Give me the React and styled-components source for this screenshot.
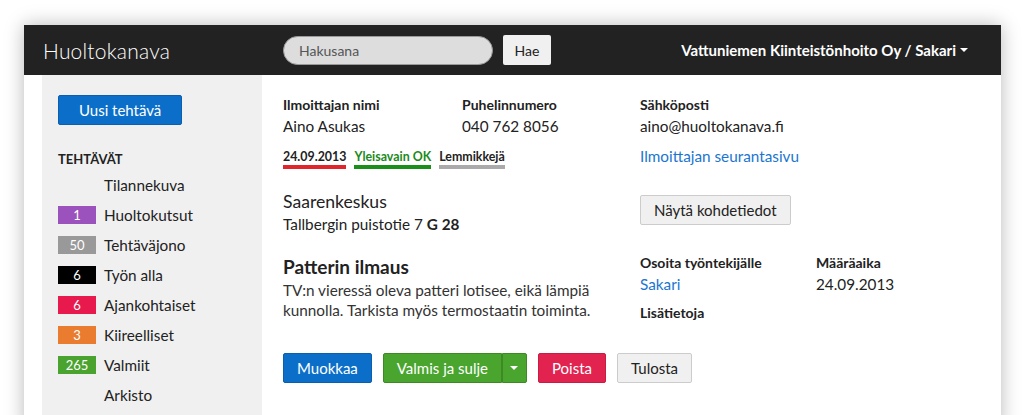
import React from 'react';
import styled, { createGlobalStyle } from 'styled-components';

const Global = createGlobalStyle`
  body {
    margin: 0;
    background: #fff;
    font-family: Lato, "Open Sans", sans-serif;
    color: #222;
  }
`;

const Window = styled.div`
  margin: 25px 0 0 24px;
  width: 977px;
  min-height: 400px;
  background: #fff;
  box-shadow: 0 0 18px rgba(0, 0, 0, 0.28);
`;

const Header = styled.div`
  height: 50px;
  background: #222;
  display: flex;
  align-items: center;
  padding: 0 33px 0 19px;
`;

const Brand = styled.div`
  width: 240px;
  flex-shrink: 0;
  color: #fff;
  font-size: 21px;
  font-weight: 300;
  letter-spacing: 0.2px;
`;

const Search = styled.input`
  width: 210px;
  height: 29px;
  box-sizing: border-box;
  border-radius: 15px;
  border: 1px solid #999;
  background: #ddd;
  padding: 0 15px;
  font-family: inherit;
  font-size: 14px;
  color: #333;
  &::placeholder { color: #555; }
`;

const SearchButton = styled.button`
  margin-left: 10px;
  width: 48px;
  height: 30px;
  border: none;
  border-radius: 2px;
  background: #f0f0f0;
  font-family: inherit;
  font-size: 14px;
  color: #222;
`;

const UserMenu = styled.div`
  margin-left: auto;
  color: #fff;
  font-size: 15px;
  font-weight: 700;
  display: flex;
  align-items: center;
  gap: 4px;
`;

const Caret = styled.span`
  width: 0;
  height: 0;
  border-left: 4px solid transparent;
  border-right: 4px solid transparent;
  border-top: 4px solid #fff;
`;

const Body = styled.div`
  display: flex;
  padding-left: 18px;
`;

const Sidebar = styled.div`
  width: 220px;
  flex-shrink: 0;
  min-height: 340px;
  background: #f0f0f0;
  padding: 20px 16px;
  box-sizing: border-box;
`;

const Button = styled.button`
  height: 30px;
  padding: 0 ${p => p.$pad || 13}px;
  border-radius: 2px;
  font-family: inherit;
  font-size: 15px;
  background: ${p => p.$bg || '#f0f0f0'};
  color: ${p => (p.$bg ? '#fff' : '#222')};
  border: 1px solid ${p => p.$border || '#ccc'};
  display: inline-flex;
  align-items: center;
  justify-content: center;
`;

const SideHeading = styled.div`
  margin-top: 25px;
  font-size: 13px;
  font-weight: 700;
  line-height: 18px;
  color: #222;
`;

const NavList = styled.div`
  margin-top: 2px;
  display: flex;
  flex-direction: column;
`;

const NavItem = styled.div`
  height: 30px;
  display: flex;
  align-items: center;
  font-size: 15.3px;
  color: #222;
`;

const Badge = styled.span`
  width: 38px;
  height: 18px;
  margin-right: 8px;
  background: ${p => p.$color || 'transparent'};
  color: #fff;
  font-size: 13px;
  display: flex;
  align-items: center;
  justify-content: center;
`;

const Content = styled.div`
  flex: 1;
  padding: 20px 0 0 21px;
`;

const Columns = styled.div`
  display: flex;
`;

const LeftCol = styled.div`
  width: 357px;
  display: flex;
  flex-direction: column;
`;

const RightCol = styled.div`
  flex: 1;
  display: flex;
  flex-direction: column;
`;

const Pair = styled.div`
  display: grid;
  grid-template-columns: ${p => p.$col}px ${p => p.$col}px;
  margin-top: ${p => p.$top || 0}px;
`;

const Label = styled.div`
  font-size: 14px;
  font-weight: 700;
  line-height: 20px;
  color: #222;
  margin-top: ${p => p.$top || 0}px;
`;

const Value = styled.div`
  font-size: 15.3px;
  line-height: 22px;
  color: ${p => (p.$link ? '#1a76cf' : '#222')};
  margin-top: ${p => p.$top || 0}px;
`;

const Tags = styled.div`
  margin-top: 12px;
  display: flex;
  gap: 8px;
  align-items: flex-start;
`;

const Tag = styled.span`
  font-size: 12.4px;
  font-weight: 700;
  line-height: 16px;
  color: ${p => p.$text};
  border-bottom: 4px solid ${p => p.$line};
`;

const Place = styled.div`
  margin-top: 22px;
  font-size: 17.6px;
  line-height: 22px;
  color: #222;
`;

const TaskTitle = styled.div`
  margin-top: 19px;
  font-size: 19px;
  font-weight: 700;
  line-height: 26px;
  color: #222;
`;

const TaskText = styled.div`
  font-size: 15.3px;
  line-height: 20px;
  color: #333;
`;

const InfoButton = styled(Button)`
  margin-top: 28px;
  align-self: flex-start;
`;

const Actions = styled.div`
  margin-top: 30px;
  display: flex;
  gap: 11px;
`;

const Split = styled.div`
  display: flex;
`;

const SplitMain = styled(Button)`
  border-radius: 2px 0 0 2px;
`;

const SplitCaret = styled(Button)`
  width: 25px;
  padding: 0;
  border-left: 1px solid #3d8a25;
  border-radius: 0 2px 2px 0;
`;

const nav = [
  { label: 'Tilannekuva' },
  { label: 'Huoltokutsut', count: 1, color: '#9b52bd' },
  { label: 'Tehtäväjono', count: 50, color: '#999' },
  { label: 'Työn alla', count: 6, color: '#000' },
  { label: 'Ajankohtaiset', count: 6, color: '#e8194d' },
  { label: 'Kiireelliset', count: 3, color: '#ea7c30' },
  { label: 'Valmiit', count: 265, color: '#4aa32e' },
  { label: 'Arkisto' },
];

export default function App() {
  return (
    <>
      <Global />
      <Window>
        <Header>
          <Brand>Huoltokanava</Brand>
          <Search placeholder="Hakusana" />
          <SearchButton>Hae</SearchButton>
          <UserMenu>
            Vattuniemen Kiinteistönhoito Oy / Sakari <Caret />
          </UserMenu>
        </Header>
        <Body>
          <Sidebar>
            <Button $bg="#0b6fca" $border="#0a5fae" $pad={20}>Uusi tehtävä</Button>
            <SideHeading>TEHTÄVÄT</SideHeading>
            <NavList>
              {nav.map(item => (
                <NavItem key={item.label}>
                  <Badge $color={item.color}>{item.count}</Badge>
                  {item.label}
                </NavItem>
              ))}
            </NavList>
          </Sidebar>
          <Content>
            <Columns>
              <LeftCol>
                <Pair $col={179}>
                  <div>
                    <Label>Ilmoittajan nimi</Label>
                    <Value>Aino Asukas</Value>
                  </div>
                  <div>
                    <Label>Puhelinnumero</Label>
                    <Value>040 762 8056</Value>
                  </div>
                </Pair>
                <Tags>
                  <Tag $text="#222" $line="#e0262b">24.09.2013</Tag>
                  <Tag $text="#1a8a1a" $line="#1a8f1a">Yleisavain OK</Tag>
                  <Tag $text="#222" $line="#aaa">Lemmikkejä</Tag>
                </Tags>
                <Place>Saarenkeskus</Place>
                <Value>Tallbergin puistotie 7 <b>G 28</b></Value>
                <TaskTitle>Patterin ilmaus</TaskTitle>
                <TaskText>
                  TV:n vieressä oleva patteri lotisee, eikä lämpiä<br />
                  kunnolla. Tarkista myös termostaatin toiminta.
                </TaskText>
              </LeftCol>
              <RightCol>
                <Label>Sähköposti</Label>
                <Value>aino@huoltokanava.fi</Value>
                <Value $link $top={8}>Ilmoittajan seurantasivu</Value>
                <InfoButton>Näytä kohdetiedot</InfoButton>
                <Pair $col={176} $top={28}>
                  <div>
                    <Label>Osoita työntekijälle</Label>
                    <Value $link>Sakari</Value>
                  </div>
                  <div>
                    <Label>Määräaika</Label>
                    <Value>24.09.2013</Value>
                  </div>
                </Pair>
                <Label $top={8}>Lisätietoja</Label>
              </RightCol>
            </Columns>
            <Actions>
              <Button $bg="#0b6fca" $border="#0a5fae">Muokkaa</Button>
              <Split>
                <SplitMain $bg="#4aa52e" $border="#3d8a25">Valmis ja sulje</SplitMain>
                <SplitCaret $bg="#4aa52e" $border="#3d8a25"><Caret /></SplitCaret>
              </Split>
              <Button $bg="#e2224f" $border="#c81c44">Poista</Button>
              <Button>Tulosta</Button>
            </Actions>
          </Content>
        </Body>
      </Window>
    </>
  );
}
